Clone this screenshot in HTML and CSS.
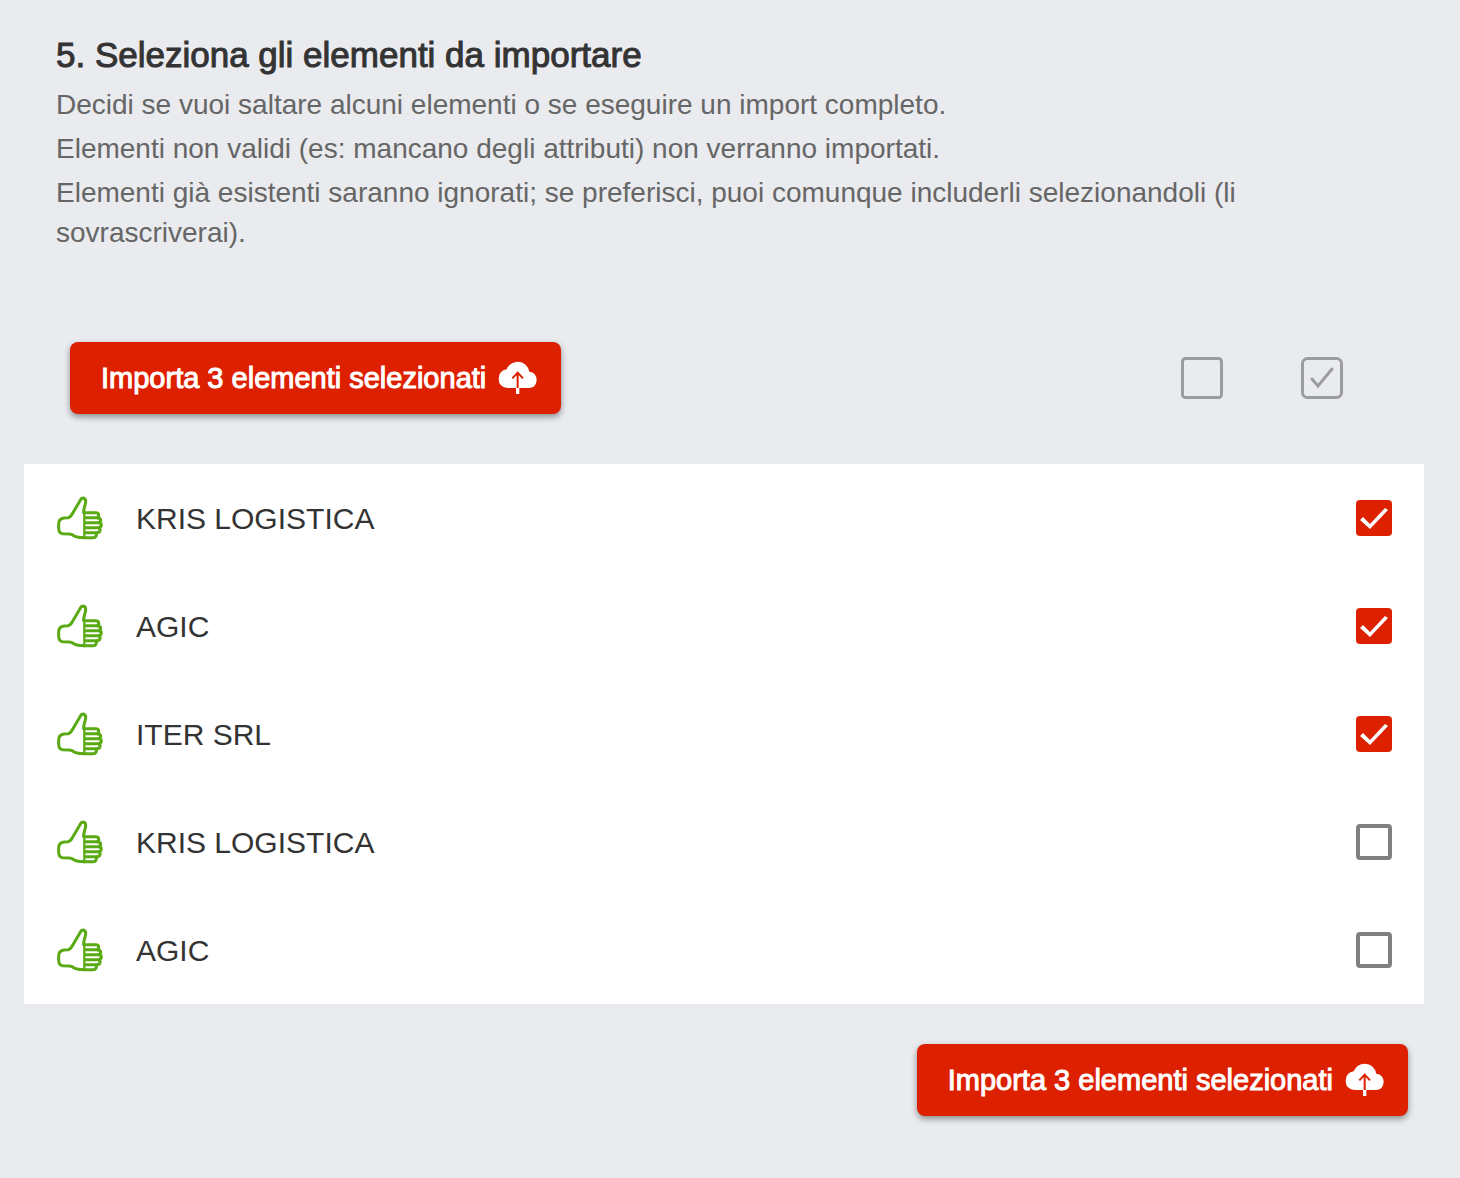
FILE: index.html
```html
<!DOCTYPE html>
<html lang="it">
<head>
<meta charset="utf-8">
<meta name="viewport" content="width=device-width, initial-scale=1">
<title>Seleziona gli elementi da importare</title>
<link rel="stylesheet" href="styles.css">
</head>
<body>
<svg class="sprite" aria-hidden="true">
  <symbol id="thumb" viewBox="48 42 144 144">
    <g fill="none" stroke="currentColor" stroke-width="9" stroke-linejoin="round" stroke-linecap="round">
      <path d="M131 98V92L137 67Q138 55 129 54Q124 54 121 61L97 101Q91 112 84 113L72 114Q56 116 56 132V144Q56 160 68 161L88 162Q97 163 103 168Q110 173 134 173"/>
      <path d="M133 98H167Q176 98 176 106V113H138"/>
      <path d="M172 113Q182 114 182 121T174 128H138"/>
      <path d="M176 128Q185 130 184 136T176 143H138"/>
      <path d="M176 143Q181 147 180 152T172 158H138"/>
      <path d="M170 158Q170 172 160 173H134"/>
      <path d="M133 98V173" stroke-width="7"/>
    </g>
  </symbol>
  <symbol id="cloud" viewBox="58 54 120 120">
    <path fill="currentColor" d="M88 144Q60 142 60 116Q61 92 84 88Q93 66 118 65Q145 66 152 95Q173 97 174 120Q173 142 152 144H122V162H112V144Z"/>
    <path class="cloud-arrow" d="M117 144V99M101 115L117 98L133 115"/>
  </symbol>
</svg>
<main class="page">
  <header class="intro">
    <h1 class="title">5. Seleziona gli elementi da importare</h1>
    <p class="text">Decidi se vuoi saltare alcuni elementi o se eseguire un import completo.</p>
    <p class="text">Elementi non validi (es: mancano degli attributi) non verranno importati.</p>
    <p class="text">Elementi già esistenti saranno ignorati; se preferisci, puoi comunque includerli selezionandoli (li sovrascriverai).</p>
  </header>

  <div class="toolbar">
    <button class="import" type="button">Importa 3 elementi selezionati <svg class="cloud" aria-hidden="true"><use href="#cloud"/></svg></button>
    <div class="bulk">
      <button class="bulk-button" type="button" aria-label="Deseleziona tutti">
        <svg class="bulk-icon" viewBox="0 0 42 42"><rect x="1.5" y="1.5" width="39" height="39" rx="3"/></svg>
      </button>
      <button class="bulk-button" type="button" aria-label="Seleziona tutti">
        <svg class="bulk-icon" viewBox="0 0 42 42"><rect x="1.5" y="1.5" width="39" height="39" rx="5"/><path d="M11 22L17 29L31 12"/></svg>
      </button>
    </div>
  </div>

  <ul class="list">
    <li><label class="row"><svg class="thumb" aria-hidden="true"><use href="#thumb"/></svg><span class="name">KRIS LOGISTICA</span><input class="check" type="checkbox" checked></label></li>
    <li><label class="row"><svg class="thumb" aria-hidden="true"><use href="#thumb"/></svg><span class="name">AGIC</span><input class="check" type="checkbox" checked></label></li>
    <li><label class="row"><svg class="thumb" aria-hidden="true"><use href="#thumb"/></svg><span class="name">ITER SRL</span><input class="check" type="checkbox" checked></label></li>
    <li><label class="row"><svg class="thumb" aria-hidden="true"><use href="#thumb"/></svg><span class="name">KRIS LOGISTICA</span><input class="check" type="checkbox"></label></li>
    <li><label class="row"><svg class="thumb" aria-hidden="true"><use href="#thumb"/></svg><span class="name">AGIC</span><input class="check" type="checkbox"></label></li>
  </ul>

  <footer class="footer">
    <button class="import" type="button">Importa 3 elementi selezionati <svg class="cloud" aria-hidden="true"><use href="#cloud"/></svg></button>
  </footer>
</main>
</body>
</html>
```
FILE: styles.css
```css
* {
  box-sizing: border-box;
}

body {
  margin: 0;
  background: #e9ebee;
  color: #333;
  font-family: "Helvetica Neue", "Liberation Sans", Arial, sans-serif;
}

.sprite {
  display: none;
}

.page {
  padding: 32px 36px 62px 24px;
}

.intro {
  padding: 0 32px;
}

.title {
  margin: 0 0 8px;
  font-size: 35px;
  font-weight: 400;
  line-height: 45px;
  -webkit-text-stroke: 1px currentColor;
}

.text {
  margin: 0 0 4px;
  color: #666;
  font-size: 28px;
  line-height: 40px;
}

.toolbar {
  display: flex;
  align-items: center;
  justify-content: space-between;
  padding: 85px 42px 50px 46px;
}

.import {
  display: flex;
  align-items: center;
  gap: 12px;
  height: 72px;
  padding: 0 23px 0 31px;
  border: 0;
  border-radius: 8px;
  background: #dc2000;
  box-shadow: 0 3px 6px rgba(0, 0, 0, 0.4);
  color: #fff;
  font-family: inherit;
  font-size: 29px;
  line-height: 40px;
  white-space: nowrap;
  -webkit-text-stroke: 1px currentColor;
}

.cloud {
  width: 40px;
  height: 40px;
  -webkit-text-stroke: 0;
}

.cloud-arrow {
  fill: none;
  stroke: #dc2000;
  stroke-width: 6;
}

.bulk {
  display: flex;
}

.bulk-button {
  display: flex;
  align-items: center;
  justify-content: center;
  width: 120px;
  height: 72px;
  padding: 0;
  border: 0;
  background: none;
}

.bulk-icon {
  width: 42px;
  height: 42px;
  overflow: visible;
  fill: none;
  stroke: #9b9ba3;
  stroke-width: 3;
  stroke-linecap: round;
}

.list {
  margin: 0;
  padding: 0;
  background: #fff;
  list-style: none;
}

.row {
  display: flex;
  align-items: center;
  gap: 32px;
  height: 108px;
  padding: 0 32px;
}

.thumb {
  width: 48px;
  height: 48px;
  color: #5aaa14;
}

.name {
  flex: 1;
  padding-top: 2px;
  font-size: 30px;
  line-height: 40px;
}

.check {
  display: grid;
  width: 36px;
  height: 36px;
  margin: 0;
  border: 4px solid #808080;
  border-radius: 4px;
  background: #fff;
  appearance: none;
}

.check:checked {
  border: 0;
  background: #dc2000;
}

.check:checked::before {
  content: "";
  background: #fff;
  clip-path: polygon(4px 20px, 7px 17px, 14px 24px, 29px 8px, 32px 10px, 14px 29px);
}

.footer {
  display: flex;
  justify-content: flex-end;
  padding: 40px 16px 0;
}
```
